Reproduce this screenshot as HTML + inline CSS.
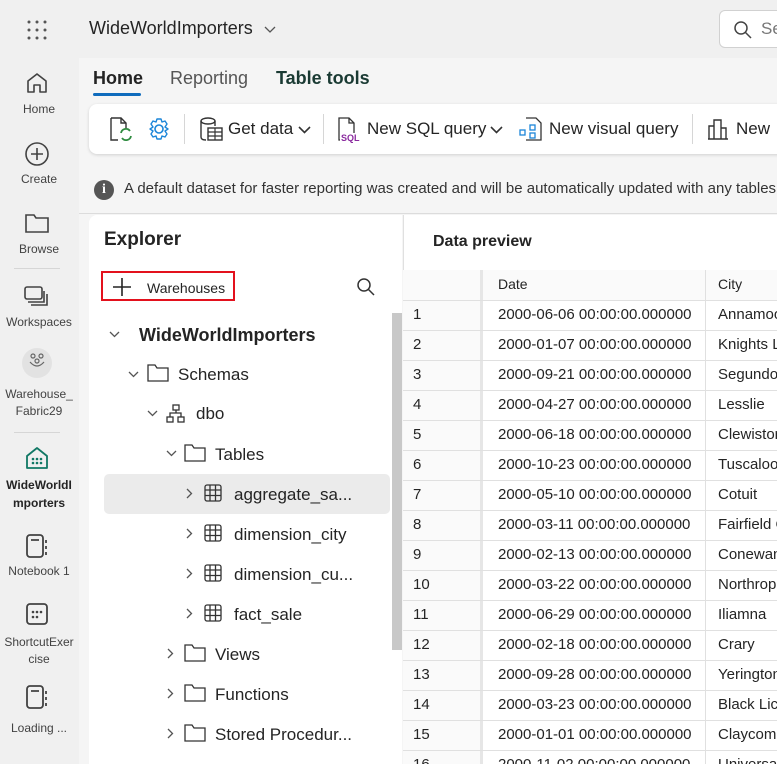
<!DOCTYPE html>
<html><head><meta charset="utf-8"><style>
*{box-sizing:border-box;margin:0;padding:0}
html,body{width:777px;height:764px;overflow:hidden}
body{background:#f0f0f0;font-family:"Segoe UI","Liberation Sans",sans-serif;color:#242424;position:relative}
.a{position:absolute;white-space:nowrap}
.nav{left:0;top:0;width:78px;height:764px;background:#f0f0f0}
.nl{width:78px;text-align:center;font-size:12px;color:#424242}
.main{left:79px;top:58px;width:698px;height:706px;background:#f5f5f5}
.rib{left:89px;top:104px;width:700px;height:50px;background:#fff;border-radius:8px;box-shadow:0 1px 3px rgba(0,0,0,.15)}
.rt{font-size:17px;top:116px}
.sep{width:1px;height:30px;background:#d6d6d6;top:114px}
.exp{left:89px;top:215px;width:313px;height:549px;background:#fff;border-radius:8px 0 0 0}
.tr{font-size:17px;color:#242424}
.dp{left:403px;top:215px;width:380px;height:549px;background:#fff;border-left:1px solid #e0e0e0}
.row{left:403px;width:380px;height:30px;border-bottom:1px solid #e0e0e0;font-size:15px}
.row span{position:absolute;top:5px}
.num{position:absolute;left:0;top:0;width:80px;height:29px;background:#fafafa;border-right:3px solid #e6e6e6}
</style></head><body>
<div class="a nav"></div>
<div class="a" style="left:26px;top:19px;width:22px;height:22px">
<svg width="22" height="22"><g fill="#555"><circle cx="3" cy="3" r="1.5"/><circle cx="11" cy="3" r="1.5"/><circle cx="19" cy="3" r="1.5"/><circle cx="3" cy="11" r="1.5"/><circle cx="11" cy="11" r="1.5"/><circle cx="19" cy="11" r="1.5"/><circle cx="3" cy="19" r="1.5"/><circle cx="11" cy="19" r="1.5"/><circle cx="19" cy="19" r="1.5"/></g></svg></div>
<div class="a" style="left:89px;top:18px;font-size:18px">WideWorldImporters</div>
<svg class="a" style="left:264px;top:26px" width="12" height="8"><path d="M1 1L6 6L11 1" fill="none" stroke="#555" stroke-width="1.3"/></svg>
<div class="a" style="left:719px;top:10px;width:70px;height:38px;background:#fff;border:1px solid #d1d1d1;border-radius:6px"></div>
<svg class="a" style="left:733px;top:20px" width="20" height="20"><circle cx="8" cy="8" r="6" fill="none" stroke="#444" stroke-width="1.5"/><path d="M12.5 12.5L18 18" stroke="#444" stroke-width="1.5"/></svg>
<div class="a" style="left:761px;top:19px;font-size:17px;color:#777">Se</div>

<svg class="a" style="left:25px;top:71px" width="24" height="24"><path d="M3 10L12 3L21 10V21H15V14H9V21H3Z" fill="none" stroke="#424242" stroke-width="1.6" stroke-linejoin="round"/></svg>
<div class="a nl" style="top:102px">Home</div>
<svg class="a" style="left:24px;top:141px" width="26" height="26"><circle cx="13" cy="13" r="11" fill="none" stroke="#424242" stroke-width="1.6"/><path d="M13 7V19M7 13H19" stroke="#424242" stroke-width="1.6"/></svg>
<div class="a nl" style="top:172px">Create</div>
<svg class="a" style="left:24px;top:212px" width="26" height="22"><path d="M2 3H10L12 6H24V20H2Z" fill="none" stroke="#424242" stroke-width="1.6"/></svg>
<div class="a nl" style="top:242px">Browse</div>
<div class="a" style="left:14px;top:268px;width:46px;height:1px;background:#d6d6d6"></div>
<svg class="a" style="left:24px;top:285px" width="26" height="24"><rect x="1" y="2" width="17" height="12" rx="2" fill="none" stroke="#424242" stroke-width="1.6"/><path d="M4 17H20V6M7 20H23V9" fill="none" stroke="#424242" stroke-width="1.6"/></svg>
<div class="a nl" style="top:315px">Workspaces</div>
<div class="a" style="left:22px;top:348px;width:30px;height:30px;border-radius:50%;background:#e2e2e2"></div>
<svg class="a" style="left:28px;top:353px" width="18" height="18"><g fill="none" stroke="#666" stroke-width="1.2"><circle cx="5" cy="3" r="2"/><circle cx="13" cy="3" r="2"/><circle cx="9" cy="8" r="2"/><path d="M2 9Q9 17 16 9"/></g></svg>
<div class="a nl" style="top:386px;line-height:17px">Warehouse_<br>Fabric29</div>
<div class="a" style="left:14px;top:432px;width:46px;height:1px;background:#d6d6d6"></div>
<svg class="a" style="left:25px;top:446px" width="24" height="24"><path d="M2 10L12 2L22 10V22H2Z" fill="none" stroke="#117865" stroke-width="1.8" stroke-linejoin="round"/><g fill="#117865"><circle cx="8" cy="13" r="1.3"/><circle cx="12" cy="13" r="1.3"/><circle cx="16" cy="13" r="1.3"/><circle cx="8" cy="17" r="1.3"/><circle cx="12" cy="17" r="1.3"/><circle cx="16" cy="17" r="1.3"/></g></svg>
<div class="a nl" style="top:476px;line-height:18px;font-weight:bold;color:#242424">WideWorldI<br>mporters</div>
<svg class="a" style="left:25px;top:533px" width="24" height="26"><rect x="2" y="2" width="16" height="22" rx="3" fill="none" stroke="#424242" stroke-width="1.8"/><path d="M6 7H14M21 7V10M21 13V16M21 19V22" stroke="#424242" stroke-width="1.8"/></svg>
<div class="a nl" style="top:564px">Notebook 1</div>
<svg class="a" style="left:25px;top:602px" width="24" height="24"><rect x="2" y="2" width="20" height="20" rx="3" fill="none" stroke="#424242" stroke-width="1.8"/><g fill="#424242"><circle cx="8" cy="10" r="1.3"/><circle cx="12" cy="10" r="1.3"/><circle cx="16" cy="10" r="1.3"/><circle cx="8" cy="15" r="1.3"/><circle cx="12" cy="15" r="1.3"/></g></svg>
<div class="a nl" style="top:634px;line-height:17px">ShortcutExer<br>cise</div>
<svg class="a" style="left:25px;top:684px" width="24" height="26"><rect x="2" y="2" width="16" height="22" rx="3" fill="none" stroke="#424242" stroke-width="1.8"/><path d="M6 7H14M21 7V10M21 13V16M21 19V22" stroke="#424242" stroke-width="1.8"/></svg>
<div class="a nl" style="top:721px">Loading ...</div>

<div class="a main"></div>
<div class="a" style="left:93px;top:68px;font-size:18px;font-weight:600">Home</div>
<div class="a" style="left:93px;top:93px;width:48px;height:3px;background:#0f6cbd;border-radius:2px"></div>
<div class="a" style="left:170px;top:68px;font-size:18px;color:#555">Reporting</div>
<div class="a" style="left:276px;top:68px;font-size:18px;font-weight:600;color:#1a3a33">Table tools</div>

<div class="a rib"></div>
<svg class="a" style="left:108px;top:116px" width="26" height="28"><path d="M3 2H13L18 7V13M3 2V24H10" fill="none" stroke="#333" stroke-width="1.4"/><path d="M13 2V7H18" fill="none" stroke="#333" stroke-width="1.4"/><path d="M13 17A5 5 0 0 1 22 15M23 20A5 5 0 0 1 14 22" fill="none" stroke="#2e8b3f" stroke-width="1.8"/></svg>
<svg class="a" style="left:147px;top:117px" width="24" height="24"><circle cx="12" cy="12" r="4" fill="none" stroke="#1c86d9" stroke-width="1.6"/><path d="M10 2H14L15 5L18 4L20 7L18 10L21 12L18 14L20 17L18 20L15 19L14 22H10L9 19L6 20L4 17L6 14L3 12L6 10L4 7L6 4L9 5Z" fill="none" stroke="#1c86d9" stroke-width="1.4" stroke-linejoin="round"/></svg>
<div class="a sep" style="left:184px"></div>
<svg class="a" style="left:199px;top:117px" width="26" height="26"><ellipse cx="9" cy="4" rx="7" ry="3" fill="none" stroke="#333" stroke-width="1.4"/><path d="M2 4V20Q2 23 7 23M16 4V9" fill="none" stroke="#333" stroke-width="1.4"/><rect x="9" y="11" width="14" height="12" fill="#fff" stroke="#333" stroke-width="1.4"/><path d="M9 15H23M9 19H23M16 11V23" stroke="#333" stroke-width="1.2"/></svg>
<div class="a rt" style="left:228px;top:119px">Get data</div>
<svg class="a" style="left:298px;top:126px" width="13" height="8"><path d="M1 1L6.5 6.5L12 1" fill="none" stroke="#333" stroke-width="1.6"/></svg>
<div class="a sep" style="left:323px"></div>
<svg class="a" style="left:336px;top:116px" width="26" height="28"><path d="M3 2H13L18 7V24H3Z" fill="none" stroke="#333" stroke-width="1.3"/><path d="M13 2V7H18" fill="none" stroke="#333" stroke-width="1.3"/><rect x="4" y="17" width="20" height="9" fill="#fff"/><text x="5" y="25" font-size="9" fill="#8a2a9e" font-family="Liberation Sans" font-weight="bold">SQL</text></svg>
<div class="a rt" style="left:367px;top:119px">New SQL query</div>
<svg class="a" style="left:490px;top:126px" width="13" height="8"><path d="M1 1L6.5 6.5L12 1" fill="none" stroke="#333" stroke-width="1.6"/></svg>
<svg class="a" style="left:518px;top:116px" width="26" height="28"><path d="M8 2H18L23 7V24H8" fill="none" stroke="#333" stroke-width="1.3"/><g fill="#fff" stroke="#1c86d9" stroke-width="1.3"><rect x="2" y="14" width="5" height="5"/><rect x="12" y="9" width="5" height="5"/><rect x="12" y="17" width="5" height="5"/></g></svg>
<div class="a rt" style="left:549px;top:119px">New visual query</div>
<div class="a sep" style="left:692px"></div>
<svg class="a" style="left:707px;top:118px" width="22" height="22"><path d="M1 21H21M2 21V8H7V21M7 21V2H14V21M14 21V10H19V21" fill="none" stroke="#333" stroke-width="1.4"/></svg>
<div class="a rt" style="left:736px;top:119px">New</div>

<div class="a" style="left:94px;top:180px;width:20px;height:20px;border-radius:50%;background:#555;color:#fff;font-size:14px;text-align:center;line-height:20px;font-weight:bold;font-family:'Liberation Serif',serif">i</div>
<div class="a" style="left:124px;top:180px;font-size:15px;color:#333">A default dataset for faster reporting was created and will be automatically updated with any tables</div>
<div class="a" style="left:79px;top:213px;width:698px;height:1px;background:#dcdcdc"></div>

<div class="a exp"></div>
<div class="a" style="left:104px;top:229px;font-size:19px;font-weight:600">Explorer</div>
<div class="a" style="left:101px;top:271px;width:134px;height:30px;border:2px solid #e3111d"></div>
<svg class="a" style="left:112px;top:277px" width="20" height="20"><path d="M10 1V19M1 10H19" stroke="#242424" stroke-width="1.6"/></svg>
<div class="a" style="left:147px;top:280px;font-size:14px">Warehouses</div>
<svg class="a" style="left:356px;top:277px" width="20" height="20"><circle cx="8" cy="8" r="6" fill="none" stroke="#333" stroke-width="1.5"/><path d="M12.5 12.5L18 18" stroke="#333" stroke-width="1.5"/></svg>
<div class="a" style="left:392px;top:313px;width:10px;height:337px;background:#c8c8c8"></div>
<div class="a" style="left:104px;top:474px;width:286px;height:40px;background:#ebebeb;border-radius:5px"></div>

<svg class="a" style="left:109px;top:331px" width="11" height="7"><path d="M1 1L5.5 5.5L10 1" fill="none" stroke="#555" stroke-width="1.3"/></svg>
<div class="a" style="left:139px;top:325px;font-size:18px;font-weight:600">WideWorldImporters</div>
<svg class="a" style="left:128px;top:371px" width="11" height="7"><path d="M1 1L5.5 5.5L10 1" fill="none" stroke="#555" stroke-width="1.3"/></svg>
<svg class="a" style="left:147px;top:363px" width="22" height="20"><path d="M1 2H8L10 5H21V18H1Z" fill="none" stroke="#333" stroke-width="1.3"/></svg>
<div class="a tr" style="left:178px;top:365px">Schemas</div>
<svg class="a" style="left:147px;top:410px" width="11" height="7"><path d="M1 1L5.5 5.5L10 1" fill="none" stroke="#555" stroke-width="1.3"/></svg>
<svg class="a" style="left:166px;top:404px" width="20" height="20"><g fill="none" stroke="#333" stroke-width="1.3"><rect x="7" y="1" width="6" height="5"/><rect x="1" y="13" width="6" height="5"/><rect x="12" y="13" width="6" height="5"/><path d="M10 6V9H4V13M10 9H15V13"/></g></svg>
<div class="a tr" style="left:196px;top:404px">dbo</div>
<svg class="a" style="left:166px;top:450px" width="11" height="7"><path d="M1 1L5.5 5.5L10 1" fill="none" stroke="#555" stroke-width="1.3"/></svg>
<svg class="a" style="left:184px;top:443px" width="22" height="20"><path d="M1 2H8L10 5H21V18H1Z" fill="none" stroke="#333" stroke-width="1.3"/></svg>
<div class="a tr" style="left:215px;top:445px">Tables</div>

<svg class="a" style="left:186px;top:488px" width="7" height="11"><path d="M1 1L5.5 5.5L1 10" fill="none" stroke="#555" stroke-width="1.3"/></svg>
<svg class="a" style="left:204px;top:484px" width="18" height="18"><g fill="none" stroke="#333" stroke-width="1.3"><rect x="1" y="1" width="16" height="16" rx="2"/><path d="M1 6H17M1 11.5H17M6 1V17M11.5 1V17"/></g></svg>
<div class="a tr" style="left:234px;top:485px">aggregate_sa...</div>
<svg class="a" style="left:186px;top:528px" width="7" height="11"><path d="M1 1L5.5 5.5L1 10" fill="none" stroke="#555" stroke-width="1.3"/></svg>
<svg class="a" style="left:204px;top:524px" width="18" height="18"><g fill="none" stroke="#333" stroke-width="1.3"><rect x="1" y="1" width="16" height="16" rx="2"/><path d="M1 6H17M1 11.5H17M6 1V17M11.5 1V17"/></g></svg>
<div class="a tr" style="left:234px;top:525px">dimension_city</div>
<svg class="a" style="left:186px;top:568px" width="7" height="11"><path d="M1 1L5.5 5.5L1 10" fill="none" stroke="#555" stroke-width="1.3"/></svg>
<svg class="a" style="left:204px;top:564px" width="18" height="18"><g fill="none" stroke="#333" stroke-width="1.3"><rect x="1" y="1" width="16" height="16" rx="2"/><path d="M1 6H17M1 11.5H17M6 1V17M11.5 1V17"/></g></svg>
<div class="a tr" style="left:234px;top:565px">dimension_cu...</div>
<svg class="a" style="left:186px;top:608px" width="7" height="11"><path d="M1 1L5.5 5.5L1 10" fill="none" stroke="#555" stroke-width="1.3"/></svg>
<svg class="a" style="left:204px;top:604px" width="18" height="18"><g fill="none" stroke="#333" stroke-width="1.3"><rect x="1" y="1" width="16" height="16" rx="2"/><path d="M1 6H17M1 11.5H17M6 1V17M11.5 1V17"/></g></svg>
<div class="a tr" style="left:234px;top:605px">fact_sale</div>

<svg class="a" style="left:167px;top:648px" width="7" height="11"><path d="M1 1L5.5 5.5L1 10" fill="none" stroke="#555" stroke-width="1.3"/></svg>
<svg class="a" style="left:184px;top:643px" width="22" height="20"><path d="M1 2H8L10 5H21V18H1Z" fill="none" stroke="#333" stroke-width="1.3"/></svg>
<div class="a tr" style="left:215px;top:645px">Views</div>
<svg class="a" style="left:167px;top:688px" width="7" height="11"><path d="M1 1L5.5 5.5L1 10" fill="none" stroke="#555" stroke-width="1.3"/></svg>
<svg class="a" style="left:184px;top:683px" width="22" height="20"><path d="M1 2H8L10 5H21V18H1Z" fill="none" stroke="#333" stroke-width="1.3"/></svg>
<div class="a tr" style="left:215px;top:685px">Functions</div>
<svg class="a" style="left:167px;top:728px" width="7" height="11"><path d="M1 1L5.5 5.5L1 10" fill="none" stroke="#555" stroke-width="1.3"/></svg>
<svg class="a" style="left:184px;top:723px" width="22" height="20"><path d="M1 2H8L10 5H21V18H1Z" fill="none" stroke="#333" stroke-width="1.3"/></svg>
<div class="a tr" style="left:215px;top:725px">Stored Procedur...</div>

<div class="a dp"></div>
<div class="a" style="left:433px;top:233px;font-size:16px;font-weight:600">Data preview</div>
<div class="a row" style="top:270px;height:31px;background:#fafafa"><div class="num" style="height:30px"></div><span style="left:95px;top:6px;font-size:14px">Date</span><span style="left:315px;top:6px;font-size:14px">City</span><div style="position:absolute;left:302px;top:0;width:1px;height:31px;background:#e0e0e0"></div></div>
<div id="rows"></div>
<script>
var d=[["2000-06-06","Annamoose"],["2000-01-07","Knights L"],["2000-09-21","Segundo"],["2000-04-27","Lesslie"],["2000-06-18","Clewiston"],["2000-10-23","Tuscaloosa"],["2000-05-10","Cotuit"],["2000-03-11","Fairfield C"],["2000-02-13","Conewango"],["2000-03-22","Northrop"],["2000-06-29","Iliamna"],["2000-02-18","Crary"],["2000-09-28","Yerington"],["2000-03-23","Black Lick"],["2000-01-01","Claycomo"],["2000-11-02","Universal"]];
var h="";d.forEach(function(r,i){h+='<div class="a row" style="top:'+(301+i*30)+'px"><div class="num"></div><span style="left:10px">'+(i+1)+'</span><span style="left:95px">'+r[0]+' 00:00:00.000000</span><div style="position:absolute;left:302px;top:0;width:1px;height:30px;background:#e0e0e0"></div><span style="left:315px">'+r[1]+'</span></div>';});
document.getElementById("rows").innerHTML=h;
</script>
</body></html>
